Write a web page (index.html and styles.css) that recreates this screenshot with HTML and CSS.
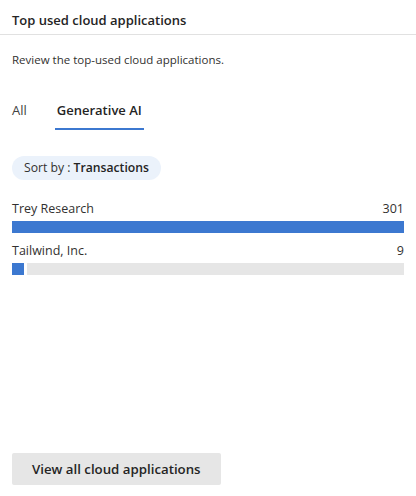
FILE: index.html
```html
<!DOCTYPE html>
<html lang="en">
<head>
<meta charset="utf-8">
<title>Top used cloud applications</title>
<link rel="stylesheet" href="styles.css">
</head>
<body>
<div class="card">
  <div class="card-header">
    <h2 class="card-title">Top used cloud applications</h2>
  </div>
  <div class="card-body">
    <p class="subtitle">Review the top-used cloud applications.</p>
    <div class="tabs" role="tablist">
      <div class="tab" role="tab">All</div>
      <div class="tab tab-active" role="tab">Generative AI</div>
    </div>
    <div class="sort-pill">Sort by : <span class="sort-value">Transactions</span></div>
    <div class="rows">
      <div class="row">
        <div class="row-head"><span>Trey Research</span><span>301</span></div>
        <div class="bar"><div class="bar-fill" style="width:100%"></div></div>
      </div>
      <div class="row">
        <div class="row-head"><span>Tailwind, Inc.</span><span>9</span></div>
        <div class="bar"><div class="bar-fill" style="width:12px"></div></div>
      </div>
    </div>
    <div class="footer">
      <button class="btn">View all cloud applications</button>
    </div>
  </div>
</div>
</body>
</html>
```
FILE: styles.css
```css
* { box-sizing: border-box; }
html, body { margin: 0; padding: 0; background: #ffffff; }
body {
  font-family: "Open Sans", "Noto Sans", sans-serif;
  color: #242424;
}
.card {
  width: 416px;
  height: 496px;
  display: flex;
  flex-direction: column;
}
.card-header {
  padding: 10px 12px 4px;
  border-bottom: 1px solid #e1e1e1;
}
.card-title {
  margin: 0;
  font-size: 13px;
  line-height: 20px;
  font-weight: 600;
  color: #242424;
}
.card-body {
  flex: 1;
  display: flex;
  flex-direction: column;
  padding: 0 12px 11px;
}
.subtitle {
  margin: 17px 0 0;
  font-size: 11.5px;
  line-height: 16px;
  color: #323130;
}
.tabs {
  display: flex;
  gap: 26px;
  margin: 24px 0 0 -2px;
}
.tab {
  padding: 8px 2px 8px;
  font-size: 13px;
  line-height: 20px;
  color: #424242;
  border-bottom: 2px solid transparent;
}
.tab-active {
  font-weight: 600;
  color: #242424;
  border-bottom-color: #3c78d0;
}
.sort-pill {
  align-self: flex-start;
  margin-top: 26px;
  height: 24px;
  line-height: 24px;
  padding: 0 12px;
  border-radius: 12px;
  background: #ebf2fb;
  font-size: 12.2px;
  color: #323130;
}
.sort-value { font-weight: 600; color: #242424; }
.rows {
  margin-top: 20px;
  display: flex;
  flex-direction: column;
  gap: 9px;
}
.row-head {
  display: flex;
  justify-content: space-between;
  font-size: 12.5px;
  line-height: 18px;
  color: #323130;
  margin-bottom: 3px;
}
.bar {
  height: 12px;
  background: #e6e6e6;
  display: flex;
}
.bar-fill {
  height: 100%;
  background: #3c78d0;
  border-right: 3px solid #ffffff;
  box-sizing: content-box;
}
.row:first-child .bar-fill { border-right: 0; }
.footer {
  margin-top: auto;
}
.btn {
  height: 32px;
  padding: 0 20px;
  border: 0;
  border-radius: 2px;
  background: #e6e6e6;
  font-family: inherit;
  font-size: 13.25px;
  font-weight: 600;
  color: #242424;
  cursor: pointer;
}
```
